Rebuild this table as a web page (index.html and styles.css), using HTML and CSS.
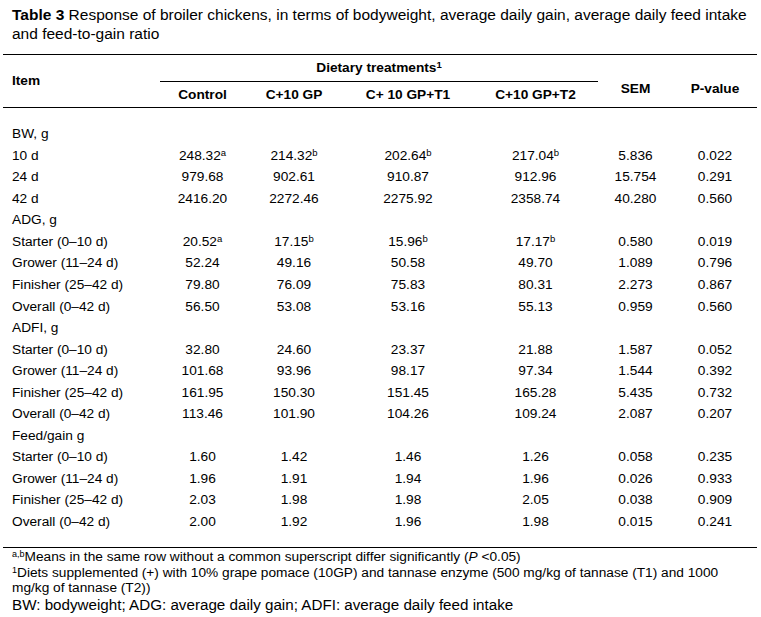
FILE: index.html
```html
<!DOCTYPE html>
<html lang="en">
<head>
<meta charset="utf-8">
<title>Table 3</title>
<link rel="stylesheet" href="styles.css">
</head>
<body>
<div class="page">
  <p class="title"><b>Table 3</b> Response of broiler chickens, in terms of bodyweight, average daily gain, average daily feed intake and feed-to-gain ratio</p>
  <table class="tbl">
    <colgroup>
      <col class="c-item"><col class="c-ctrl"><col class="c-gp"><col class="c-t1"><col class="c-t2"><col class="c-sem"><col class="c-p">
    </colgroup>
    <thead>
      <tr>
        <th rowspan="2" class="h-item">Item</th>
        <th colspan="4" class="h-group">Dietary treatments<sup>1</sup></th>
        <th rowspan="2" class="h-stat">SEM</th>
        <th rowspan="2" class="h-stat">P-value</th>
      </tr>
      <tr>
        <th class="h-sub">Control</th>
        <th class="h-sub">C+10 GP</th>
        <th class="h-sub">C+ 10 GP+T1</th>
        <th class="h-sub">C+10 GP+T2</th>
      </tr>
    </thead>
    <tbody>
      <tr class="first"><td>BW, g</td><td></td><td></td><td></td><td></td><td></td><td></td></tr>
      <tr><td>10 d</td><td>248.32<sup>a</sup></td><td>214.32<sup>b</sup></td><td>202.64<sup>b</sup></td><td>217.04<sup>b</sup></td><td>5.836</td><td>0.022</td></tr>
      <tr><td>24 d</td><td>979.68</td><td>902.61</td><td>910.87</td><td>912.96</td><td>15.754</td><td>0.291</td></tr>
      <tr><td>42 d</td><td>2416.20</td><td>2272.46</td><td>2275.92</td><td>2358.74</td><td>40.280</td><td>0.560</td></tr>
      <tr><td>ADG, g</td><td></td><td></td><td></td><td></td><td></td><td></td></tr>
      <tr><td>Starter (0–10 d)</td><td>20.52<sup>a</sup></td><td>17.15<sup>b</sup></td><td>15.96<sup>b</sup></td><td>17.17<sup>b</sup></td><td>0.580</td><td>0.019</td></tr>
      <tr><td>Grower (11–24 d)</td><td>52.24</td><td>49.16</td><td>50.58</td><td>49.70</td><td>1.089</td><td>0.796</td></tr>
      <tr><td>Finisher (25–42 d)</td><td>79.80</td><td>76.09</td><td>75.83</td><td>80.31</td><td>2.273</td><td>0.867</td></tr>
      <tr><td>Overall (0–42 d)</td><td>56.50</td><td>53.08</td><td>53.16</td><td>55.13</td><td>0.959</td><td>0.560</td></tr>
      <tr><td>ADFI, g</td><td></td><td></td><td></td><td></td><td></td><td></td></tr>
      <tr><td>Starter (0–10 d)</td><td>32.80</td><td>24.60</td><td>23.37</td><td>21.88</td><td>1.587</td><td>0.052</td></tr>
      <tr><td>Grower (11–24 d)</td><td>101.68</td><td>93.96</td><td>98.17</td><td>97.34</td><td>1.544</td><td>0.392</td></tr>
      <tr><td>Finisher (25–42 d)</td><td>161.95</td><td>150.30</td><td>151.45</td><td>165.28</td><td>5.435</td><td>0.732</td></tr>
      <tr><td>Overall (0–42 d)</td><td>113.46</td><td>101.90</td><td>104.26</td><td>109.24</td><td>2.087</td><td>0.207</td></tr>
      <tr><td>Feed/gain g</td><td></td><td></td><td></td><td></td><td></td><td></td></tr>
      <tr><td>Starter (0–10 d)</td><td>1.60</td><td>1.42</td><td>1.46</td><td>1.26</td><td>0.058</td><td>0.235</td></tr>
      <tr><td>Grower (11–24 d)</td><td>1.96</td><td>1.91</td><td>1.94</td><td>1.96</td><td>0.026</td><td>0.933</td></tr>
      <tr><td>Finisher (25–42 d)</td><td>2.03</td><td>1.98</td><td>1.98</td><td>2.05</td><td>0.038</td><td>0.909</td></tr>
      <tr class="last"><td>Overall (0–42 d)</td><td>2.00</td><td>1.92</td><td>1.96</td><td>1.98</td><td>0.015</td><td>0.241</td></tr>
    </tbody>
  </table>
  <div class="notes">
    <p class="note"><sup>a,b</sup>Means in the same row without a common superscript differ significantly (<i>P</i> &lt;0.05)</p>
    <p class="note"><sup>1</sup>Diets supplemented (+) with 10% grape pomace (10GP) and tannase enzyme (500 mg/kg of tannase (T1) and 1000 mg/kg of tannase (T2))</p>
    <p class="note-abbr">BW: bodyweight; ADG: average daily gain; ADFI: average daily feed intake</p>
  </div>
</div>
</body>
</html>
```

FILE: styles.css
```css
html, body {
  margin: 0;
  padding: 0;
  background: #ffffff;
  color: #000000;
  font-family: "Liberation Sans", Arial, sans-serif;
}

.page {
  padding-top: 5px;
}

.title {
  margin: 0 0 0 12px;
  width: 745px;
  font-size: 15.5px;
  line-height: 19px;
}

.title b {
  font-weight: bold;
}

.tbl {
  margin: 11px 0 0 3px;
  width: 754px;
  border-collapse: separate;
  border-spacing: 0;
  table-layout: fixed;
  font-size: 13.7px;
}

.c-item { width: 157px; }
.c-ctrl { width: 85px; }
.c-gp { width: 98px; }
.c-t1 { width: 130px; }
.c-t2 { width: 125px; }
.c-sem { width: 75px; }
.c-p { width: 84px; }

.tbl th {
  font-weight: bold;
  padding: 0;
  text-align: center;
  white-space: nowrap;
}

.h-item {
  text-align: left !important;
  padding-left: 9px !important;
  border-top: 1px solid #000;
  border-bottom: 1px solid #000;
  line-height: 16px;
  vertical-align: middle;
}

.h-group {
  border-top: 1px solid #000;
  border-bottom: 1px solid #000;
  line-height: 26px;
  vertical-align: middle;
}

.h-stat {
  border-top: 1px solid #000;
  border-bottom: 1px solid #000;
  line-height: 16px;
  padding-top: 16px !important;
  vertical-align: middle;
}

.h-sub {
  border-bottom: 1px solid #000;
  line-height: 25px;
  vertical-align: middle;
}

.tbl td {
  padding: 0;
  line-height: 21.55px;
  text-align: center;
  white-space: nowrap;
}

.tbl td:first-child {
  text-align: left;
  padding-left: 9px;
}

.tbl tr.first td {
  padding-top: 15.2px;
}

.tbl tr.last td {
  padding-bottom: 14.35px;
  border-bottom: 1px solid #000;
}

sup {
  font-size: 9.5px;
  line-height: 0;
  vertical-align: 4.5px;
}

.notes {
  padding-left: 12px;
  padding-top: 1px;
}

.note {
  margin: 0;
  font-size: 13.7px;
  line-height: 15.7px;
  width: 740px;
}

.note sup {
  font-size: 9px;
  vertical-align: 4.5px;
}

.note-abbr {
  margin: 0;
  font-size: 15.2px;
  line-height: 18px;
}
```
